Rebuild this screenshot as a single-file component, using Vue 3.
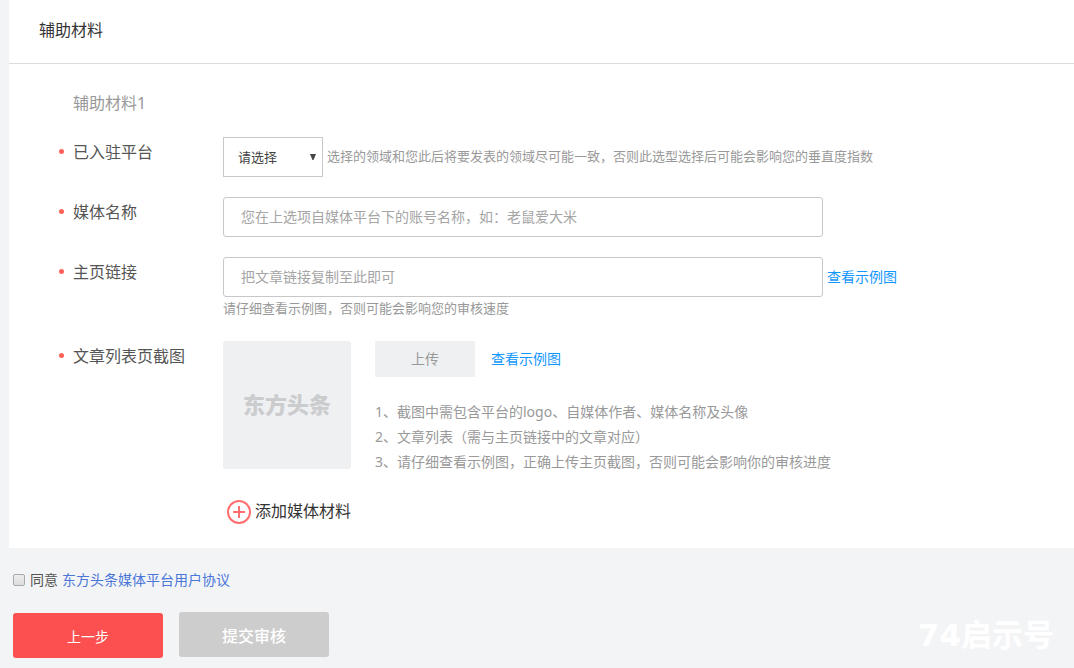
<script setup>
import { ref } from 'vue'

const platform = ref('')
const mediaName = ref('')
const homeLink = ref('')
const agreed = ref(false)

const tips = [
  '1、截图中需包含平台的logo、自媒体作者、媒体名称及头像',
  '2、文章列表（需与主页链接中的文章对应）',
  '3、请仔细查看示例图，正确上传主页截图，否则可能会影响你的审核进度'
]
</script>

<template>
  <main class="page">
    <section class="card">
      <header class="card-head">
        <h1>辅助材料</h1>
      </header>
      <form class="form" @submit.prevent>
        <h2>辅助材料1</h2>

        <div class="row">
          <label class="label" for="platform">已入驻平台</label>
          <div class="field">
            <div class="line">
              <div class="select-box">
                <select id="platform" v-model="platform">
                  <option value="">请选择</option>
                </select>
                <svg class="arrow" viewBox="0 0 6 6" aria-hidden="true"><path d="M0 0h6L3.5 6h-1z" /></svg>
              </div>
              <span class="hint">选择的领域和您此后将要发表的领域尽可能一致，否则此选型选择后可能会影响您的垂直度指数</span>
            </div>
          </div>
        </div>

        <div class="row">
          <label class="label" for="media-name">媒体名称</label>
          <div class="field">
            <div class="line">
              <input id="media-name" v-model="mediaName" class="text-input" type="text" placeholder="您在上选项自媒体平台下的账号名称，如：老鼠爱大米" />
            </div>
          </div>
        </div>

        <div class="row">
          <label class="label" for="home-link">主页链接</label>
          <div class="field">
            <div class="line">
              <input id="home-link" v-model="homeLink" class="text-input" type="text" placeholder="把文章链接复制至此即可" />
              <a class="example" href="#">查看示例图</a>
            </div>
            <p class="hint">请仔细查看示例图，否则可能会影响您的审核速度</p>
          </div>
        </div>

        <div class="row">
          <span id="shot-label" class="label">文章列表页截图</span>
          <div class="field upload">
            <div class="preview">东方头条</div>
            <div class="upload-info">
              <div class="upload-bar">
                <button class="upload-btn" type="button" aria-describedby="shot-label">上传</button>
                <a class="example" href="#">查看示例图</a>
              </div>
              <ul class="tips">
                <li v-for="tip in tips" :key="tip">{{ tip }}</li>
              </ul>
            </div>
          </div>
        </div>

        <button class="add" type="button">
          <svg viewBox="0 0 24 24" aria-hidden="true">
            <circle cx="12" cy="12" r="11" />
            <path d="M12 6v12M6 12h12" />
          </svg>
          <span>添加媒体材料</span>
        </button>
      </form>
    </section>

    <footer class="footer">
      <div class="agree">
        <input id="agree" v-model="agreed" type="checkbox" />
        <label for="agree">同意</label>
        <a href="#">东方头条媒体平台用户协议</a>
      </div>
      <div class="actions">
        <button class="prev" type="button">上一步</button>
        <button class="submit" type="button">提交审核</button>
      </div>
      <span class="watermark">74启示号</span>
    </footer>
  </main>
</template>

<style>
body {
  background: #f3f4f6;
}
</style>

<style scoped>
.page {
  box-sizing: border-box;
  min-height: 100vh;
  background: #f3f4f6;
  color: #555;
  font-family: "Noto Sans", "Noto Sans CJK SC", sans-serif;
  font-size: 14px;
}
h1, h2, p, ul {
  margin: 0;
  padding: 0;
  font-weight: 400;
}
button, input, select {
  box-sizing: border-box;
  margin: 0;
  font-family: inherit;
}
button {
  padding: 0;
  border: 0;
  cursor: pointer;
}
a {
  text-decoration: none;
}
.card {
  margin-left: 9px;
  background: #fff;
}
.card-head {
  padding: 18px 30px 21px;
  border-bottom: 1px solid #dcdcdc;
}
h1 {
  color: #333;
  font-size: 16px;
  line-height: 24px;
}
.form {
  padding: 27px 0 23px 50px;
}
h2 {
  margin: 0 0 22px 14px;
  color: #999;
  font-size: 16px;
  line-height: 24px;
}
.row {
  display: flex;
  margin-bottom: 20px;
}
.label {
  display: flex;
  align-items: center;
  flex: 0 0 164px;
  height: 28px;
  font-size: 16px;
}
.label::before {
  content: "";
  width: 5px;
  height: 5px;
  margin-right: 9px;
  border-radius: 50%;
  background: #ff6159;
}
.field {
  flex: 1;
  min-width: 0;
}
.line {
  display: flex;
  align-items: center;
  gap: 4px;
}
.select-box {
  position: relative;
  flex: 0 0 100px;
}
select {
  display: block;
  width: 100%;
  height: 40px;
  padding: 0 24px 0 14px;
  border: 1px solid #c8c8c8;
  border-radius: 0;
  background: #fff;
  appearance: none;
  color: #444;
  font-size: 13px;
}
.arrow {
  position: absolute;
  top: 17px;
  right: 7px;
  width: 6px;
  height: 6px;
  fill: #444;
  pointer-events: none;
}
.hint {
  padding-bottom: 2px;
  color: #999;
  font-size: 13px;
  line-height: 22px;
}
.text-input {
  flex: 0 1 600px;
  min-width: 0;
  height: 40px;
  padding: 0 17px 2px;
  border: 1px solid #c8c8c8;
  border-radius: 3px;
  background: #fff;
  color: #555;
  font-size: 14px;
}
.text-input::placeholder {
  color: #a5a5a5;
  opacity: 1;
}
.example {
  flex: none;
  padding-bottom: 2px;
  color: #1296ff;
}
.upload {
  display: flex;
  gap: 24px;
}
.preview {
  box-sizing: border-box;
  display: flex;
  align-items: center;
  justify-content: center;
  flex: 0 0 128px;
  height: 128px;
  padding-bottom: 4px;
  border-radius: 3px;
  background: #eff0f2;
  color: #cbccce;
  font-size: 22px;
  font-weight: 900;
}
.upload-bar {
  display: flex;
  align-items: center;
  gap: 16px;
  margin-bottom: 22px;
}
.upload-btn {
  width: 100px;
  height: 36px;
  padding-bottom: 2px;
  background: #eff0f2;
  color: #999;
  font-size: 14px;
}
.tips {
  color: #999;
  line-height: 25px;
  list-style: none;
}
.add {
  display: flex;
  align-items: center;
  gap: 4px;
  margin: 25px 0 0 168px;
  background: none;
  color: #333;
  font-size: 16px;
  line-height: 24px;
}
.add span {
  padding-bottom: 2px;
}
.add svg {
  width: 24px;
  height: 24px;
  fill: none;
  stroke: #ff6f6f;
  stroke-width: 2;
}
.footer {
  position: relative;
  padding: 20px 13px 10px;
}
.agree {
  display: flex;
  align-items: center;
  gap: 4px;
  margin-bottom: 20px;
  line-height: 24px;
}
.agree input {
  width: 12px;
  height: 12px;
  margin-right: 1px;
  border: 1px solid #a9a9a9;
  border-radius: 2px;
  background: linear-gradient(#eee, #dcdcdc);
  appearance: none;
}
.agree input:checked {
  background: #4a76d8;
}
.agree a {
  color: #4a76d8;
}
.actions {
  display: flex;
  align-items: baseline;
  gap: 16px;
}
.actions button {
  width: 150px;
  height: 45px;
  border-radius: 3px;
  color: #fff;
}
.actions .prev {
  background: #fc4f4f;
  font-size: 14px;
}
.actions .submit {
  background: #cdcdcd;
  font-size: 16px;
  font-weight: 500;
}
.watermark {
  position: absolute;
  right: 20px;
  bottom: 10px;
  color: #fff;
  font-family: "DejaVu Sans", "Noto Sans CJK SC", sans-serif;
  font-size: 31px;
  font-weight: 700;
  line-height: 45px;
}
</style>
